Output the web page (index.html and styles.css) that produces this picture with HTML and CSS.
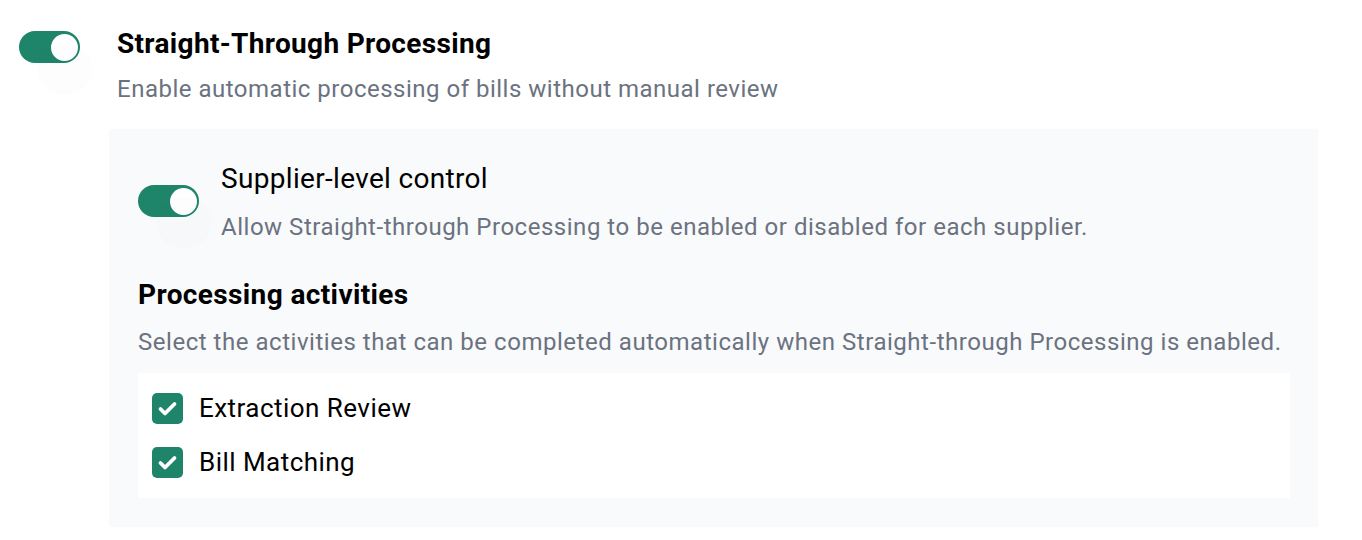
FILE: index.html
```html
<!DOCTYPE html>
<html lang="en">
<head>
  <meta charset="UTF-8">
  <title>Straight-Through Processing</title>
  <link rel="stylesheet" href="styles.css">
</head>
<body>
  <div class="settings">
    <div class="setting-row">
      <span class="toggle on"><span class="knob"></span></span>
      <div class="setting-text">
        <div class="setting-title">Straight-Through Processing</div>
        <div class="setting-desc">Enable automatic processing of bills without manual review</div>
      </div>
    </div>

    <div class="panel">
      <div class="sub-row">
        <span class="toggle on sub-toggle"><span class="knob"></span></span>
        <div class="setting-text">
          <div class="sub-title">Supplier-level control</div>
          <div class="sub-desc">Allow Straight-through Processing to be enabled or disabled for each supplier.</div>
        </div>
      </div>

      <div class="section-title">Processing activities</div>
      <div class="section-desc">Select the activities that can be completed automatically when Straight-through Processing is enabled.</div>

      <div class="activities">
        <label class="activity">
          <span class="checkbox">
            <svg viewBox="0 0 31 31" width="31" height="31"><path d="M8.5 16l4.5 4.5 9.5-9.5" fill="none" stroke="#fff" stroke-width="3.8" stroke-linecap="round" stroke-linejoin="round"/></svg>
          </span>
          <span class="activity-label">Extraction Review</span>
        </label>
        <label class="activity">
          <span class="checkbox">
            <svg viewBox="0 0 31 31" width="31" height="31"><path d="M8.5 16l4.5 4.5 9.5-9.5" fill="none" stroke="#fff" stroke-width="3.8" stroke-linecap="round" stroke-linejoin="round"/></svg>
          </span>
          <span class="activity-label">Bill Matching</span>
        </label>
      </div>
    </div>
  </div>
</body>
</html>
```

FILE: styles.css
```css
body {
  margin: 0;
  background: #fff;
  font-family: Roboto, 'Liberation Sans', Arial, sans-serif;
  color: #000;
}

.settings {
  padding: 28px 0 0 19px;
  width: 1299px;
}

.setting-row {
  display: flex;
  gap: 37px;
}

.toggle {
  position: relative;
  flex: none;
  width: 61px;
  height: 32px;
  border-radius: 16px;
  background: #ccc;
  margin-top: 3px;
}

.toggle.on {
  background: #1f856a;
}

.knob {
  position: absolute;
  top: 2.5px;
  right: 2px;
  width: 27px;
  height: 27px;
  border-radius: 50%;
  background: #fff;
}

/* leftover ripple halo under the switch */
.toggle::after {
  content: '';
  position: absolute;
  left: 18px;
  top: 12px;
  width: 56px;
  height: 52px;
  border-radius: 50%;
  background: rgba(0, 0, 0, 0.006);
  pointer-events: none;
}

.setting-title {
  font-size: 28px;
  line-height: 32px;
  font-weight: 700;
  letter-spacing: 0.33px;
}

.setting-desc {
  margin-top: 14px;
  font-size: 24px;
  line-height: 30px;
  letter-spacing: 0.5px;
  color: #6b7280;
}

.panel {
  margin: 25px 0 0 90px;
  background: #f9fafb;
  padding: 34px 28px 29px 29px;
}

.sub-row {
  display: flex;
  gap: 22px;
}

.sub-toggle {
  margin-top: 22px;
}

.sub-title {
  font-size: 28px;
  line-height: 32px;
  letter-spacing: 0.32px;
}

.sub-desc {
  margin-top: 17px;
  font-size: 24px;
  line-height: 30px;
  letter-spacing: 0.52px;
  color: #6b7280;
}

.section-title {
  margin-top: 37px;
  font-size: 28px;
  line-height: 32px;
  font-weight: 700;
  letter-spacing: 0.38px;
}

.section-desc {
  margin-top: 16px;
  font-size: 24px;
  line-height: 30px;
  letter-spacing: 0.53px;
  color: #6b7280;
}

.activities {
  margin-top: 16px;
  background: #fff;
  padding: 20px 14px 20px;
  display: flex;
  flex-direction: column;
  gap: 23px;
}

.activity {
  display: flex;
  align-items: center;
  gap: 16px;
  height: 31px;
}

.checkbox {
  flex: none;
  width: 31px;
  height: 31px;
  border-radius: 5px;
  background: #1f856a;
  display: flex;
}

.activity-label {
  font-size: 26px;
  line-height: 31px;
  letter-spacing: 0.46px;
}
```
